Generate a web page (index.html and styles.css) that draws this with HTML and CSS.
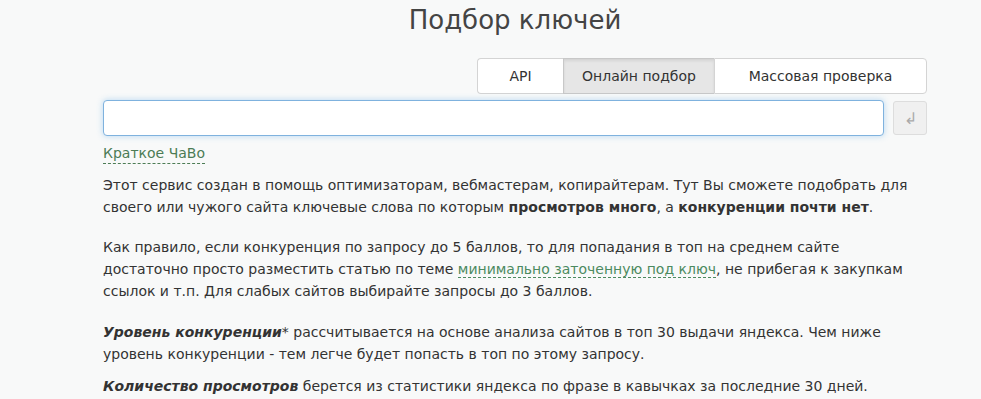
FILE: index.html
```html
<!DOCTYPE html>
<html lang="ru">
<head>
    <meta charset="UTF-8">
    <title>Подбор ключей</title>
    <link rel="stylesheet" href="styles.css">
</head>
<body>

<div class="page">
    <h1>Подбор ключей</h1>

    <!-- Вкладки -->
    <div class="tabs">
        <a class="tab tab-api">API</a>
        <a class="tab tab-online active">Онлайн подбор</a>
        <a class="tab tab-mass">Массовая проверка</a>
    </div>

    <!-- Поиск -->
    <div class="search">
        <input class="search-input" type="text">
        <button class="search-btn">&#8626;</button>
    </div>

    <a class="faq-link">Краткое ЧаВо</a>

    <p>Этот сервис создан в помощь оптимизаторам, вебмастерам, копирайтерам. Тут Вы сможете подобрать для своего или чужого сайта ключевые слова по которым <b>просмотров много</b>, а <b>конкуренции почти нет</b>.</p>

    <p class="tall">Как правило, если конкуренция по запросу до 5 баллов, то для попадания в топ на среднем сайте достаточно просто разместить статью по теме <a class="dashed">минимально заточенную под ключ</a>, не прибегая к закупкам ссылок и т.п. Для слабых сайтов выбирайте запросы до 3 баллов.</p>

    <p class="short"><b><i>Уровень конкуренции</i></b>* рассчитывается на основе анализа сайтов в топ 30 выдачи яндекса. Чем ниже уровень конкуренции - тем легче будет попасть в топ по этому запросу.</p>

    <p><b><i>Количество просмотров</i></b> берется из статистики яндекса по фразе в кавычках за последние 30 дней.</p>
</div>

</body>
</html>
```

FILE: styles.css
```css
body, html {
    margin: 0;
    background-color: #f8f9f9;
    font-family: "DejaVu Sans", Verdana, sans-serif;
    font-size: 14px;
    color: #333;
}

.page {
    width: 824px;
    margin: 0 0 0 103px;
}

h1 {
    margin: 0;
    padding-top: 5px;
    height: 48px;
    text-align: center;
    font-size: 26px;
    font-weight: normal;
    color: #444;
}

/* Вкладки */
.tabs {
    display: flex;
    justify-content: flex-end;
    margin-top: 5px;
}

.tab {
    display: block;
    box-sizing: border-box;
    height: 36px;
    line-height: 34px;
    text-align: center;
    background: #fff;
    border: 1px solid #d4d4d4;
    border-right: none;
    color: #333;
    cursor: pointer;
}

.tab-api {
    width: 86px;
    border-radius: 4px 0 0 4px;
}

.tab-online {
    width: 151px;
}

.tab-mass {
    width: 213px;
    border-right: 1px solid #d4d4d4;
    border-radius: 0 4px 4px 0;
}

.tab.active {
    background: #e6e6e6;
    border-color: #c8c8c8;
    box-shadow: inset 0 2px 3px rgba(0, 0, 0, 0.08);
}

/* Поиск */
.search {
    display: flex;
    gap: 9px;
    margin-top: 6px;
}

.search-input {
    flex: 1;
    height: 34px;
    padding: 0 8px;
    border: 1px solid #7fb2de;
    border-radius: 4px;
    background: #fff;
    box-shadow: 0 0 6px rgba(102, 175, 233, 0.45);
    outline: none;
    font-family: inherit;
    font-size: 14px;
}

.search-btn {
    width: 34px;
    height: 34px;
    margin-top: 1px;
    border: 1px solid #ddd;
    border-radius: 3px;
    background: #f0f0f0;
    color: #aaa;
    font-size: 16px;
    padding: 0;
}

.faq-link {
    display: inline-block;
    margin-top: 7px;
    color: #4c7c55;
    line-height: 20px;
    border-bottom: 1px dashed #4c7c55;
    cursor: pointer;
}

p {
    margin: 10px 0 18px;
    line-height: 22px;
}

p + p {
    margin-top: 0;
}

p.tall {
    margin-bottom: 19px;
}

p.short {
    margin-bottom: 10px;
}

b {
    color: #333;
}

.dashed {
    color: #4c8a60;
    border-bottom: 1px dashed #4c8a60;
    cursor: pointer;
}
```
